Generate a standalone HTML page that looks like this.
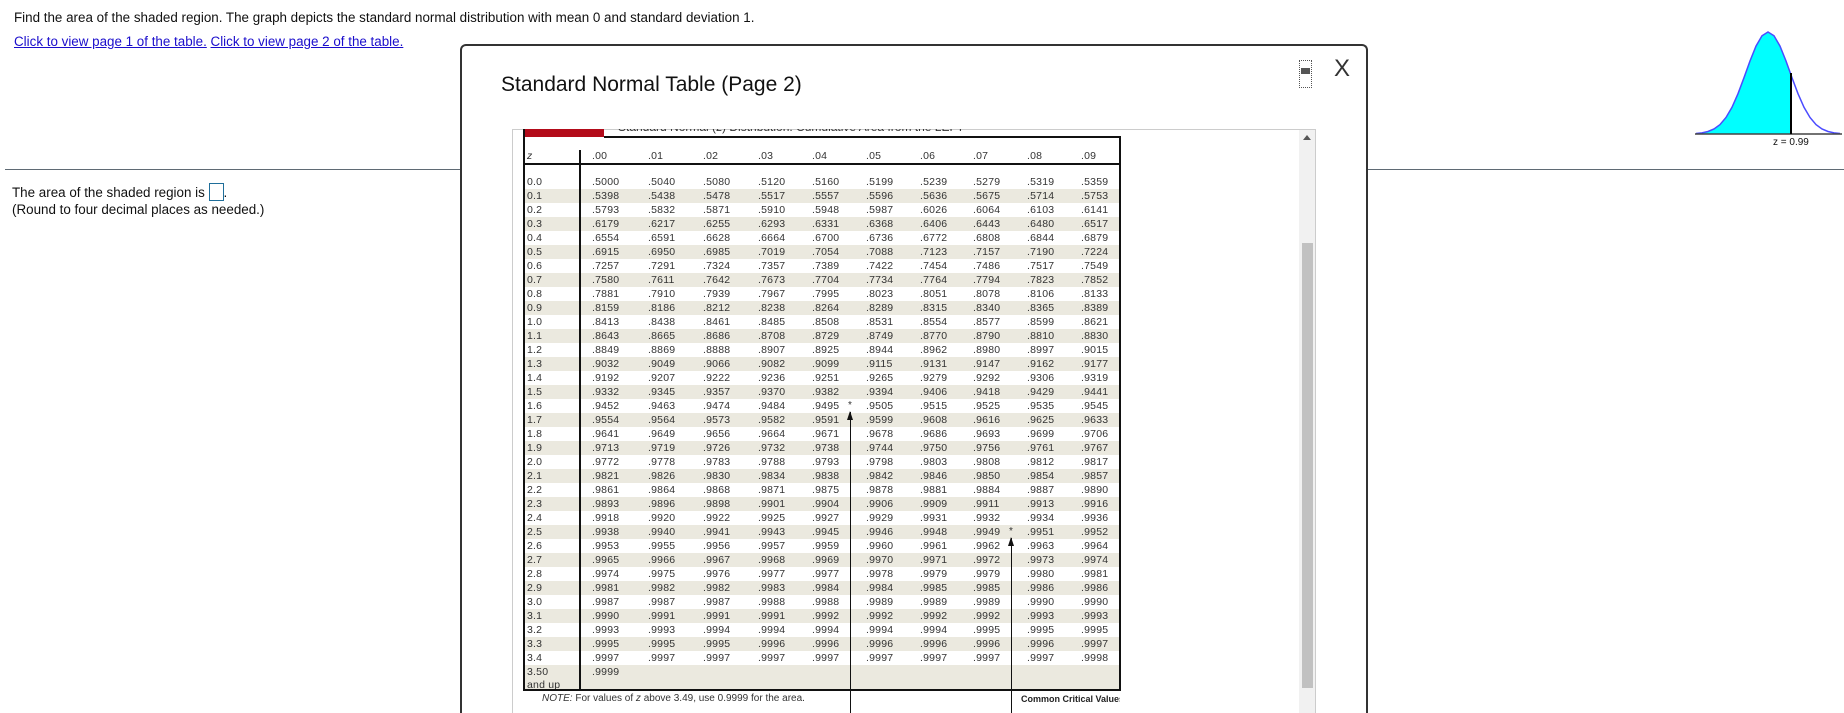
<!DOCTYPE html>
<html style="height:713px;overflow:hidden"><head><meta charset="utf-8"><style>
body{margin:0;width:1844px;height:713px;overflow:hidden;position:relative;background:#fff;font-family:"Liberation Sans",Arial,sans-serif;color:#111}
.a{position:absolute;white-space:nowrap}
.lnk{color:#1a0dcc;text-decoration:underline}
#m{position:absolute;left:460px;top:44px;width:904px;height:680px;border:2px solid #333;border-bottom:none;border-radius:6px 6px 0 0;background:#fff}
.t{position:absolute;font-size:10.5px;color:#333;letter-spacing:0.2px}
.r{position:absolute;left:523px;width:597px;height:14px;line-height:14px}
.r.s{background:#ebe9df}
.r span{position:absolute;top:0}
.r span:nth-child(1){left:4px}
.r span:nth-child(2){left:69px}.r span:nth-child(3){left:125px}.r span:nth-child(4){left:180px}.r span:nth-child(5){left:235px}.r span:nth-child(6){left:289px}.r span:nth-child(7){left:343px}.r span:nth-child(8){left:397px}.r span:nth-child(9){left:450px}.r span:nth-child(10){left:504px}.r span:nth-child(11){left:558px}
.b{position:absolute;background:#111;z-index:2}
</style></head><body>
<div class="a" style="left:14px;top:10px;font-size:13.4px">Find the area of the shaded region. The graph depicts the standard normal distribution with mean 0 and standard deviation 1.</div>
<div class="a" style="left:14px;top:34px;font-size:13.4px"><span class="lnk">Click to view page 1 of the table.</span> <span class="lnk">Click to view page 2 of the table.</span></div>
<div class="a" style="left:5px;top:169px;width:1839px;height:1px;background:#5f6a74"></div>
<div class="a" style="left:12px;top:183px;font-size:13.4px">The area of the shaded region is <span style="display:inline-block;width:13px;height:16px;border:1px solid #1f6e9a;vertical-align:-4px"></span>.</div>
<div class="a" style="left:12px;top:202px;font-size:13.4px">(Round to four decimal places as needed.)</div>

<svg class="a" style="left:1690px;top:25px" width="154" height="130">
<polygon points="6,108.5 12,107.9 18,106.5 24,104 30,99.6 36,92.5 42,82.3 48,68.7 54,52.7 60,36 66,21.1 72,10.8 78,7 84,10.8 90,21.1 96,36 101,50 101,109 6,109" fill="#00ffff"/>
<polyline points="6,108.5 12,107.9 18,106.5 24,104 30,99.6 36,92.5 42,82.3 48,68.7 54,52.7 60,36 66,21.1 72,10.8 78,7 84,10.8 90,21.1 96,36 102,52.7 108,68.7 114,82.3 120,92.5 126,99.6 132,104 138,106.5 144,107.9 150,108.5" fill="none" stroke="#4b4bff" stroke-width="1.5"/>
<line x1="5" y1="109" x2="152" y2="109" stroke="#444" stroke-width="1.5"/>
<line x1="101" y1="48" x2="101" y2="109" stroke="#000" stroke-width="2"/>
</svg>
<div class="a" style="left:1773px;top:137px;font-size:10px;color:#111">z = 0.99</div>

<div id="m"></div>
<div class="a" style="left:501px;top:73px;font-size:21px;color:#111">Standard Normal Table (Page 2)</div>
<div class="a" style="left:1299px;top:60px;width:11px;height:26px;border:1px dotted #555"></div>
<div class="a" style="left:1301px;top:68px;width:9px;height:6px;background:#555"></div>
<div class="a" style="left:1334px;top:55px;font-size:24px;color:#333">X</div>

<div class="a" style="left:512px;top:129px;width:802px;height:600px;border:1px solid #ccc"></div>
<div class="a" style="left:1299px;top:130px;width:16px;height:590px;background:#f1f1f1"></div>
<div class="a" style="left:1302px;top:243px;width:11px;height:445px;background:#c1c1c1"></div>
<div class="a" style="left:1303px;top:135px;width:0;height:0;border-left:4px solid transparent;border-right:4px solid transparent;border-bottom:5px solid #555"></div>

<div class="a" style="left:523px;top:129px;width:81px;height:8px;background:#b30b1a"></div>
<div class="a" style="left:604px;top:129px;width:516px;height:7px;overflow:hidden"><div style="position:absolute;left:14px;top:-9px;font-size:12px;color:#333">Standard Normal (z) Distribution: Cumulative Area from the LEFT</div></div>

<div class="t" style="left:0;top:0">
<div class="r" style="top:149px"><span><i>z</i></span><span>.00</span><span>.01</span><span>.02</span><span>.03</span><span>.04</span><span>.05</span><span>.06</span><span>.07</span><span>.08</span><span>.09</span></div>
<div class="r" style="top:175px"><span>0.0</span><span>.5000</span><span>.5040</span><span>.5080</span><span>.5120</span><span>.5160</span><span>.5199</span><span>.5239</span><span>.5279</span><span>.5319</span><span>.5359</span></div>
<div class="r s" style="top:189px"><span>0.1</span><span>.5398</span><span>.5438</span><span>.5478</span><span>.5517</span><span>.5557</span><span>.5596</span><span>.5636</span><span>.5675</span><span>.5714</span><span>.5753</span></div>
<div class="r" style="top:203px"><span>0.2</span><span>.5793</span><span>.5832</span><span>.5871</span><span>.5910</span><span>.5948</span><span>.5987</span><span>.6026</span><span>.6064</span><span>.6103</span><span>.6141</span></div>
<div class="r s" style="top:217px"><span>0.3</span><span>.6179</span><span>.6217</span><span>.6255</span><span>.6293</span><span>.6331</span><span>.6368</span><span>.6406</span><span>.6443</span><span>.6480</span><span>.6517</span></div>
<div class="r" style="top:231px"><span>0.4</span><span>.6554</span><span>.6591</span><span>.6628</span><span>.6664</span><span>.6700</span><span>.6736</span><span>.6772</span><span>.6808</span><span>.6844</span><span>.6879</span></div>
<div class="r s" style="top:245px"><span>0.5</span><span>.6915</span><span>.6950</span><span>.6985</span><span>.7019</span><span>.7054</span><span>.7088</span><span>.7123</span><span>.7157</span><span>.7190</span><span>.7224</span></div>
<div class="r" style="top:259px"><span>0.6</span><span>.7257</span><span>.7291</span><span>.7324</span><span>.7357</span><span>.7389</span><span>.7422</span><span>.7454</span><span>.7486</span><span>.7517</span><span>.7549</span></div>
<div class="r s" style="top:273px"><span>0.7</span><span>.7580</span><span>.7611</span><span>.7642</span><span>.7673</span><span>.7704</span><span>.7734</span><span>.7764</span><span>.7794</span><span>.7823</span><span>.7852</span></div>
<div class="r" style="top:287px"><span>0.8</span><span>.7881</span><span>.7910</span><span>.7939</span><span>.7967</span><span>.7995</span><span>.8023</span><span>.8051</span><span>.8078</span><span>.8106</span><span>.8133</span></div>
<div class="r s" style="top:301px"><span>0.9</span><span>.8159</span><span>.8186</span><span>.8212</span><span>.8238</span><span>.8264</span><span>.8289</span><span>.8315</span><span>.8340</span><span>.8365</span><span>.8389</span></div>
<div class="r" style="top:315px"><span>1.0</span><span>.8413</span><span>.8438</span><span>.8461</span><span>.8485</span><span>.8508</span><span>.8531</span><span>.8554</span><span>.8577</span><span>.8599</span><span>.8621</span></div>
<div class="r s" style="top:329px"><span>1.1</span><span>.8643</span><span>.8665</span><span>.8686</span><span>.8708</span><span>.8729</span><span>.8749</span><span>.8770</span><span>.8790</span><span>.8810</span><span>.8830</span></div>
<div class="r" style="top:343px"><span>1.2</span><span>.8849</span><span>.8869</span><span>.8888</span><span>.8907</span><span>.8925</span><span>.8944</span><span>.8962</span><span>.8980</span><span>.8997</span><span>.9015</span></div>
<div class="r s" style="top:357px"><span>1.3</span><span>.9032</span><span>.9049</span><span>.9066</span><span>.9082</span><span>.9099</span><span>.9115</span><span>.9131</span><span>.9147</span><span>.9162</span><span>.9177</span></div>
<div class="r" style="top:371px"><span>1.4</span><span>.9192</span><span>.9207</span><span>.9222</span><span>.9236</span><span>.9251</span><span>.9265</span><span>.9279</span><span>.9292</span><span>.9306</span><span>.9319</span></div>
<div class="r s" style="top:385px"><span>1.5</span><span>.9332</span><span>.9345</span><span>.9357</span><span>.9370</span><span>.9382</span><span>.9394</span><span>.9406</span><span>.9418</span><span>.9429</span><span>.9441</span></div>
<div class="r" style="top:399px"><span>1.6</span><span>.9452</span><span>.9463</span><span>.9474</span><span>.9484</span><span>.9495</span><span>.9505</span><span>.9515</span><span>.9525</span><span>.9535</span><span>.9545</span></div>
<div class="r s" style="top:413px"><span>1.7</span><span>.9554</span><span>.9564</span><span>.9573</span><span>.9582</span><span>.9591</span><span>.9599</span><span>.9608</span><span>.9616</span><span>.9625</span><span>.9633</span></div>
<div class="r" style="top:427px"><span>1.8</span><span>.9641</span><span>.9649</span><span>.9656</span><span>.9664</span><span>.9671</span><span>.9678</span><span>.9686</span><span>.9693</span><span>.9699</span><span>.9706</span></div>
<div class="r s" style="top:441px"><span>1.9</span><span>.9713</span><span>.9719</span><span>.9726</span><span>.9732</span><span>.9738</span><span>.9744</span><span>.9750</span><span>.9756</span><span>.9761</span><span>.9767</span></div>
<div class="r" style="top:455px"><span>2.0</span><span>.9772</span><span>.9778</span><span>.9783</span><span>.9788</span><span>.9793</span><span>.9798</span><span>.9803</span><span>.9808</span><span>.9812</span><span>.9817</span></div>
<div class="r s" style="top:469px"><span>2.1</span><span>.9821</span><span>.9826</span><span>.9830</span><span>.9834</span><span>.9838</span><span>.9842</span><span>.9846</span><span>.9850</span><span>.9854</span><span>.9857</span></div>
<div class="r" style="top:483px"><span>2.2</span><span>.9861</span><span>.9864</span><span>.9868</span><span>.9871</span><span>.9875</span><span>.9878</span><span>.9881</span><span>.9884</span><span>.9887</span><span>.9890</span></div>
<div class="r s" style="top:497px"><span>2.3</span><span>.9893</span><span>.9896</span><span>.9898</span><span>.9901</span><span>.9904</span><span>.9906</span><span>.9909</span><span>.9911</span><span>.9913</span><span>.9916</span></div>
<div class="r" style="top:511px"><span>2.4</span><span>.9918</span><span>.9920</span><span>.9922</span><span>.9925</span><span>.9927</span><span>.9929</span><span>.9931</span><span>.9932</span><span>.9934</span><span>.9936</span></div>
<div class="r s" style="top:525px"><span>2.5</span><span>.9938</span><span>.9940</span><span>.9941</span><span>.9943</span><span>.9945</span><span>.9946</span><span>.9948</span><span>.9949</span><span>.9951</span><span>.9952</span></div>
<div class="r" style="top:539px"><span>2.6</span><span>.9953</span><span>.9955</span><span>.9956</span><span>.9957</span><span>.9959</span><span>.9960</span><span>.9961</span><span>.9962</span><span>.9963</span><span>.9964</span></div>
<div class="r s" style="top:553px"><span>2.7</span><span>.9965</span><span>.9966</span><span>.9967</span><span>.9968</span><span>.9969</span><span>.9970</span><span>.9971</span><span>.9972</span><span>.9973</span><span>.9974</span></div>
<div class="r" style="top:567px"><span>2.8</span><span>.9974</span><span>.9975</span><span>.9976</span><span>.9977</span><span>.9977</span><span>.9978</span><span>.9979</span><span>.9979</span><span>.9980</span><span>.9981</span></div>
<div class="r s" style="top:581px"><span>2.9</span><span>.9981</span><span>.9982</span><span>.9982</span><span>.9983</span><span>.9984</span><span>.9984</span><span>.9985</span><span>.9985</span><span>.9986</span><span>.9986</span></div>
<div class="r" style="top:595px"><span>3.0</span><span>.9987</span><span>.9987</span><span>.9987</span><span>.9988</span><span>.9988</span><span>.9989</span><span>.9989</span><span>.9989</span><span>.9990</span><span>.9990</span></div>
<div class="r s" style="top:609px"><span>3.1</span><span>.9990</span><span>.9991</span><span>.9991</span><span>.9991</span><span>.9992</span><span>.9992</span><span>.9992</span><span>.9992</span><span>.9993</span><span>.9993</span></div>
<div class="r" style="top:623px"><span>3.2</span><span>.9993</span><span>.9993</span><span>.9994</span><span>.9994</span><span>.9994</span><span>.9994</span><span>.9994</span><span>.9995</span><span>.9995</span><span>.9995</span></div>
<div class="r s" style="top:637px"><span>3.3</span><span>.9995</span><span>.9995</span><span>.9995</span><span>.9996</span><span>.9996</span><span>.9996</span><span>.9996</span><span>.9996</span><span>.9996</span><span>.9997</span></div>
<div class="r" style="top:651px"><span>3.4</span><span>.9997</span><span>.9997</span><span>.9997</span><span>.9997</span><span>.9997</span><span>.9997</span><span>.9997</span><span>.9997</span><span>.9997</span><span>.9998</span></div>
<div class="r s" style="top:665px;height:24px"><span>3.50</span><span>.9999</span><span style="top:13px;left:4px">and up</span></div>
</div>
<div class="b" style="left:604px;top:136px;width:516px;height:2px"></div>
<div class="b" style="left:523px;top:163px;width:597px;height:2px"></div>
<div class="b" style="left:523px;top:129px;width:2px;height:562px"></div>
<div class="b" style="left:1119px;top:136px;width:2px;height:555px"></div>
<div class="b" style="left:523px;top:689px;width:598px;height:2px"></div>
<div class="b" style="left:579px;top:150px;width:2px;height:540px"></div>
<div class="b" style="left:850px;top:412px;width:1px;height:301px"></div>
<div class="a" style="left:847px;top:411px;width:0;height:0;border-left:3.5px solid transparent;border-right:3.5px solid transparent;border-bottom:9px solid #111;z-index:2"></div>
<div class="a" style="left:848px;top:400px;font-size:10px;color:#333">*</div>
<div class="b" style="left:1011px;top:538px;width:1px;height:175px"></div>
<div class="a" style="left:1008px;top:537px;width:0;height:0;border-left:3.5px solid transparent;border-right:3.5px solid transparent;border-bottom:9px solid #111;z-index:2"></div>
<div class="a" style="left:1009px;top:526px;font-size:10px;color:#333">*</div>
<div class="a" style="left:542px;top:693px;font-size:10px;color:#333"><i>NOTE:</i> For values of <i>z</i> above 3.49, use 0.9999 for the area.</div>
<div class="a" style="left:1021px;top:694px;font-size:9px;font-weight:bold;color:#222;width:99px;overflow:hidden">Common Critical Values</div>
</body></html>
